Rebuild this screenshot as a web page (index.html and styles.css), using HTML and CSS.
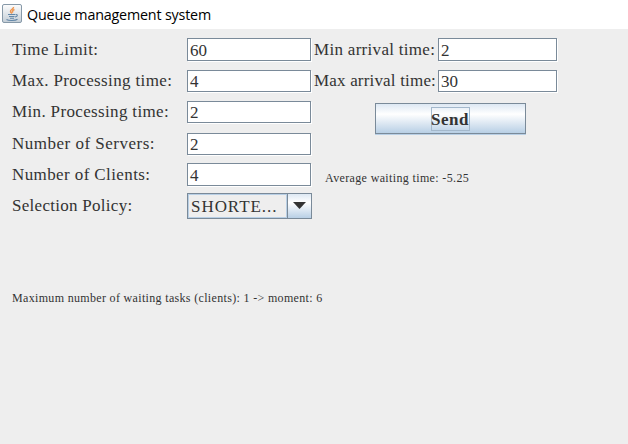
FILE: index.html
```html
<!DOCTYPE html>
<html lang="en">
<head>
<meta charset="utf-8">
<title>Queue management system</title>
<link rel="stylesheet" href="styles.css">
</head>
<body>
<header class="titlebar">
  <svg class="app-icon" width="20" height="20" viewBox="0 0 20 20">
    <defs><linearGradient id="tile" x1="0" y1="0" x2="0" y2="1"><stop offset="0" stop-color="#fdfdfd"/><stop offset="1" stop-color="#c3cdd6"/></linearGradient></defs>
    <rect x=".5" y=".5" width="19" height="18" rx="1.5" fill="url(#tile)" stroke="#8799a8"/>
    <path d="M11.5 3c.5 2-3.500 2.500-3 4.500.2 1 1 1.500 1.500 2M12.500 5.500c-2 .8-2.500 1.500-1.500 3" fill="none" stroke="#ef9650" stroke-width="1.500"/>
    <path d="M6 10.500h7M7 12.500h5.500M8 14.300h4M13.500 10.500c2.500-.5 2.500 2-.5 2.500M4.500 15.500c2 1.300 9 1.300 11-.3" fill="none" stroke="#6387a8" stroke-width="1.100"/>
  </svg>
  <h1 class="title">Queue management system</h1>
</header>
<main class="panel">
  <form class="form">
    <div class="column labels">
      <label class="label time-limit">Time Limit:</label>
      <label class="label max-processing">Max. Processing time:</label>
      <label class="label min-processing">Min. Processing time:</label>
      <label class="label servers">Number of Servers:</label>
      <label class="label clients">Number of Clients:</label>
      <label class="label policy">Selection Policy:</label>
    </div>
    <div class="column">
      <div class="field tall">60</div>
      <div class="field">4</div>
      <div class="field">2</div>
      <div class="field">2</div>
      <div class="field tall">4</div>
      <div class="combo"><span class="combo-value">SHORTE...</span><span class="combo-button"><svg width="13" height="7" viewBox="0 0 13 7"><path d="M0 0h13L6.500 7z" fill="#333"/></svg></span></div>
    </div>
    <div class="side">
      <div class="arrival">
        <div class="column labels">
          <label class="label min-arrival">Min arrival time:</label>
          <label class="label max-arrival">Max arrival time:</label>
        </div>
        <div class="column">
          <div class="field tall">2</div>
          <div class="field">30</div>
        </div>
      </div>
      <button class="send" type="button"><span class="send-text">Send</span></button>
      <p class="note average">Average waiting time: -5.25</p>
    </div>
  </form>
  <p class="note maximum">Maximum number of waiting tasks (clients): 1 -&gt; moment: 6</p>
</main>
</body>
</html>
```
FILE: styles.css
```css
* { box-sizing: border-box; }
body {
  margin: 0;
  height: 444px;
  overflow: hidden;
  background: #eee;
  color: #333;
  font-family: "Liberation Serif", serif;
  font-size: 17px;
}
.titlebar {
  display: flex;
  height: 29px;
  padding: 4px 0 0 2px;
  background: #fff;
}
.app-icon { flex: none; }
.title {
  margin: 0 0 0 5px;
  color: #000;
  font: 400 14.3px/22px "Open Sans", "Noto Sans", sans-serif;
  letter-spacing: -0.18px;
  white-space: nowrap;
}
.panel { padding: 9px 0 0 12px; }
.form {
  display: grid;
  grid-template-columns: 175px 127px 1fr;
}
.column {
  display: grid;
  grid-auto-rows: 31.2px;
  align-items: start;
}
.label {
  height: 19px;
  margin-top: 2px;
  overflow: hidden;
  line-height: 20px;
  white-space: nowrap;
}
.time-limit { letter-spacing: 0.4px; }
.max-processing { letter-spacing: 0.37px; }
.min-processing { letter-spacing: 0.35px; }
.servers { letter-spacing: 0.5px; }
.clients { letter-spacing: 0.4px; }
.policy { letter-spacing: 0.28px; }
.min-arrival { letter-spacing: 0.3px; }
.max-arrival { letter-spacing: 0.18px; }
.field {
  width: 124px;
  height: 22px;
  margin-top: 1px;
  padding-left: 2px;
  border: 1px solid #7a8a99;
  background: #fff;
  box-shadow: 1px 1px 0 #fff;
  line-height: 22px;
}
.field.tall { height: 23px; margin-top: 0; line-height: 23px; }
.combo {
  display: grid;
  grid-template: 24px / 99px 1fr;
  width: 125px;
  height: 26px;
  margin-top: -1px;
  border: 1px solid #7a8a99;
}
.combo-value {
  padding-left: 2px;
  border: 1px solid #b8cfe5;
  line-height: 23px;
  letter-spacing: 0.95px;
}
.combo-button {
  display: flex;
  align-items: center;
  justify-content: center;
  border-left: 1px solid #7a8a99;
  background: linear-gradient(#dde8f3, #fff 35%, #b8cfe5);
}
.arrival {
  display: grid;
  grid-template-columns: 124px 119px;
}
.arrival .field { width: 119px; }
.send {
  display: flex;
  align-items: center;
  justify-content: center;
  width: 151px;
  height: 31px;
  margin: 3px 0 0 61px;
  padding: 0;
  border: 1px solid #7a8a99;
  background: linear-gradient(#dde8f3, #fff 35%, #b8cfe5);
  box-shadow: 0 1px 0 #b8cfe5;
  color: #333;
  font: 700 17px/24px "Liberation Serif", serif;
  letter-spacing: 0.5px;
}
.send-text {
  width: 39px;
  height: 24px;
  border: 1px solid #a3b8cc;
  text-align: left;
  text-indent: -1px;
}
.note {
  margin: 0;
  font-size: 12px;
  line-height: 16px;
  white-space: nowrap;
}
.average { margin: 36px 0 0 11px; letter-spacing: 0.36px; }
.maximum { margin-top: 65px; letter-spacing: 0.33px; }
```
